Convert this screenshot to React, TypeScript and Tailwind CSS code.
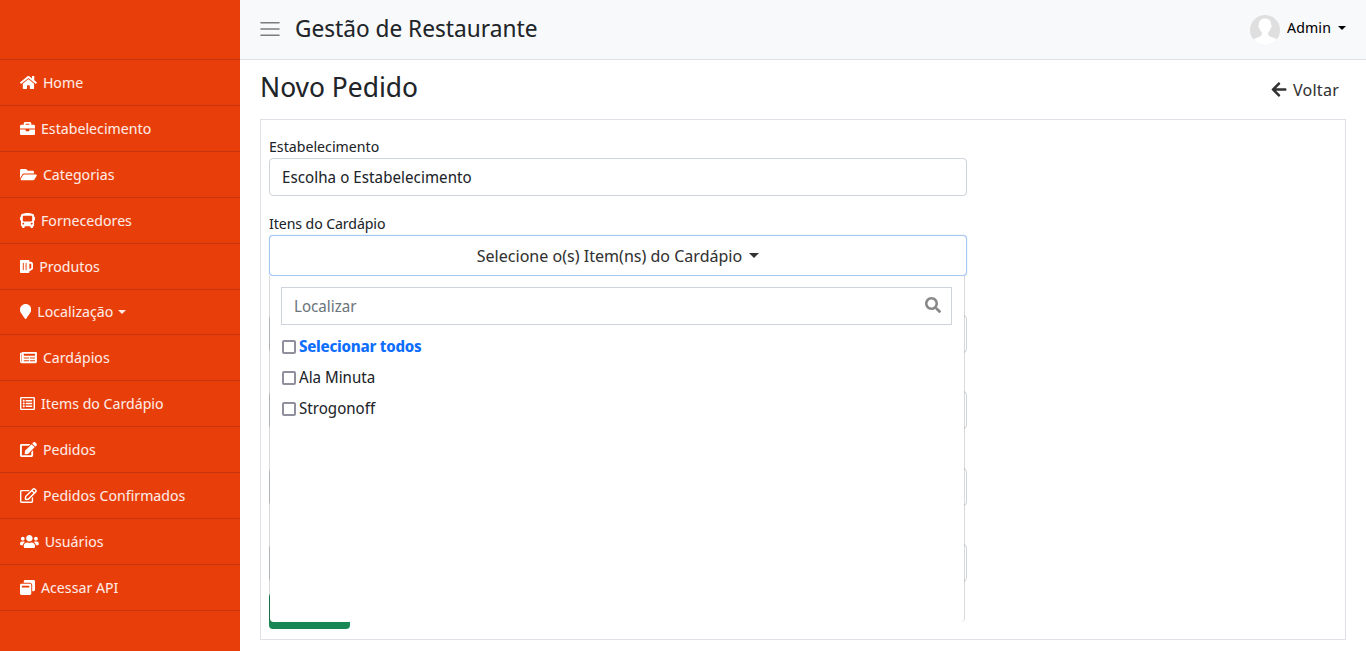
import React from "react";
import {
  FaHome, FaBriefcase, FaFolderOpen, FaBus, FaBeer, FaMapMarker, FaNewspaper,
  FaRegListAlt, FaEdit, FaRegEdit, FaUsers, FaWindowRestore, FaArrowLeft, FaSearch,
} from "react-icons/fa";

const links = [
  { label: "Home", Icon: FaHome, size: "w-[1.125em]" },
  { label: "Estabelecimento", Icon: FaBriefcase, size: "w-[1em]" },
  { label: "Categorias", Icon: FaFolderOpen, size: "w-[1.125em]" },
  { label: "Fornecedores", Icon: FaBus, size: "w-[1em]" },
  { label: "Produtos", Icon: FaBeer, size: "w-[0.875em]" },
  { label: "Localização", Icon: FaMapMarker, size: "w-[0.75em]", menu: true },
  { label: "Cardápios", Icon: FaNewspaper, size: "w-[1.125em]" },
  { label: "Items do Cardápio", Icon: FaRegListAlt, size: "w-[1em]" },
  { label: "Pedidos", Icon: FaEdit, size: "w-[1.125em]" },
  { label: "Pedidos Confirmados", Icon: FaRegEdit, size: "w-[1.125em]" },
  { label: "Usuários", Icon: FaUsers, size: "w-[1.25em]" },
  { label: "Acessar API", Icon: FaWindowRestore, size: "w-[1em]" },
];

function Caret({ className = "" }: { className?: string }) {
  return <span className={`inline-block h-0 w-0 border-x-transparent border-b-0 border-t-current ${className}`} />;
}

function Sidebar() {
  return (
    <aside className="w-[240px] shrink-0 bg-[#e83e09] text-[15px] text-white/90">
      <div className="h-[60px] border-b border-[#c63410]" />
      {links.map(({ label, Icon, size, menu }) => (
        <a key={label} className={`flex items-center border-b pl-5 ${menu ? "h-[45px] border-[#c63410] pb-px" : "h-[46px] border-[#c63410]"}`}>
          <Icon preserveAspectRatio="none" className={`h-[1em] shrink-0 text-white ${size}`} />
          <span className="ml-[6px] whitespace-nowrap">{label}</span>
          {menu && <Caret className="ml-[5px] border-x-[4.5px] border-t-[4.5px]" />}
        </a>
      ))}
    </aside>
  );
}

function Header() {
  return (
    <header className="flex h-[60px] items-center border-b border-[#dee2e6] bg-[#f8f9fa] px-5 text-[#212529]">
      <svg className="mb-[2px] h-5 w-5" viewBox="0 0 20 20" stroke="#7b7c7d" strokeWidth="1.6" strokeLinecap="round">
        <path d="M1 3.7h18M1 10h18M1 16.3h18" />
      </svg>
      <span className="mb-[3px] ml-[15px] text-2xl leading-9">Gestão de Restaurante</span>
      <svg className="ml-auto h-[30px] w-[30px] rounded-full" viewBox="0 0 30 30">
        <path fill="#dfdfdf" d="M0 0h30v30H0z" />
        <path fill="#fff" d="M15 3.5c4.2 0 6.3 2.5 6.1 6.2.8.2.8 2.7-.5 3.3-.5 2.3-1.4 3.5-2.4 4.3v2.4c.5 2.500 6.800 2.700 10 5.600V30H2v-4.700c3.200-2.900 9.300-3.100 9.800-5.600v-2.400c-1-.8-1.900-2-2.400-4.300-1.300-.6-1.300-3.100-.5-3.300C8.700 6 10.800 3.500 15 3.500z" />
      </svg>
      <span className="mb-1 ml-[7px] text-[15px] tracking-[0.1px] text-black">Admin</span>
      <Caret className="mb-1 ml-[7px] border-x-[4.5px] border-t-[4.5px] text-black" />
    </header>
  );
}

function Option({ label, all = false }: { label: string; all?: boolean }) {
  return (
    <label className={`flex h-[31px] items-center ${all ? "font-bold tracking-[-0.25px] text-[#0d6efd]" : ""}`}>
      <span className="mr-[3px] ml-[1px] mt-[2px] h-[14px] w-[14px] rounded-[2px] border-2 border-[#8f8f9d] bg-white" />
      <span className="mt-px">{label}</span>
    </label>
  );
}

function Dropdown() {
  return (
    <div className="absolute left-0 top-[41px] z-10 h-[346px] w-[696px] rounded-b border border-y-0 border-black/15 bg-white bg-clip-padding px-[11px] pt-[11px] text-base">
      <div className="flex h-[38px] w-[671px] items-center justify-between border border-[#ced4da] pl-3 pr-[10px] text-[#6c757d]">
        <span>Localizar</span>
        <FaSearch className="mb-[3px] h-4 w-4 text-[#888]" />
      </div>
      <div className="pt-[5px]">
        <Option label="Selecionar todos" all />
        <Option label="Ala Minuta" />
        <Option label="Strogonoff" />
      </div>
    </div>
  );
}

function Field({ label, children }: { label: string; children?: React.ReactNode }) {
  return (
    <div className="h-[76.4px]">
      <div className="h-[23px] text-[15px] leading-[23px]">{label}</div>
      <div className="flex h-[38px] items-center rounded border border-[#ced4da] px-3 text-base tracking-[0.06px]">{children}</div>
    </div>
  );
}

export default function App() {
  return (
    <div className="flex h-[651px] w-[1366px] overflow-hidden bg-white font-['Noto_Sans_Display','Noto_Sans',sans-serif] text-[#212529]">
      <Sidebar />
      <div className="min-w-0 flex-1">
        <Header />
        <main className="px-5">
          <div className="flex h-[59px] items-center justify-between pr-[7px]">
            <h1 className="mb-[8px] text-[28px] leading-[34px]">Novo Pedido</h1>
            <a className="flex items-center text-[17px] tracking-[0.2px] text-[#333]">
              <FaArrowLeft className="mr-[6px] h-[17px] w-[16px]" />
              Voltar
            </a>
          </div>
          <section className="h-[521px] border border-[#dee2e6] px-2 pt-[15px]">
            <div className="w-[698px]">
              <div className="h-[77px]">
                <Field label="Estabelecimento">Escolha o Estabelecimento</Field>
              </div>
              <div className="h-[80px]">
                <div className="h-[23px] text-[15px] leading-[23px] tracking-[-0.1px]">Itens do Cardápio</div>
                <div className="relative h-[41px] w-[698px]">
                  <button className="flex h-[41px] w-full items-center justify-center rounded border border-[#a9c8f1] bg-white text-[17px] text-[#333] shadow-[0_0_1px_#86b7fe]">
                    Selecione o(s) Item(ns) do Cardápio
                    <Caret className="ml-[7px] border-x-[5px] border-t-[5px]" />
                  </button>
                  <Dropdown />
                </div>
              </div>
              <Field label="" />
              <Field label="" />
              <Field label="" />
              <Field label="" />
              <div className="-mt-[4.6px] h-[36px] w-[81px] rounded bg-[#198754]" />
            </div>
          </section>
        </main>
      </div>
    </div>
  );
}
